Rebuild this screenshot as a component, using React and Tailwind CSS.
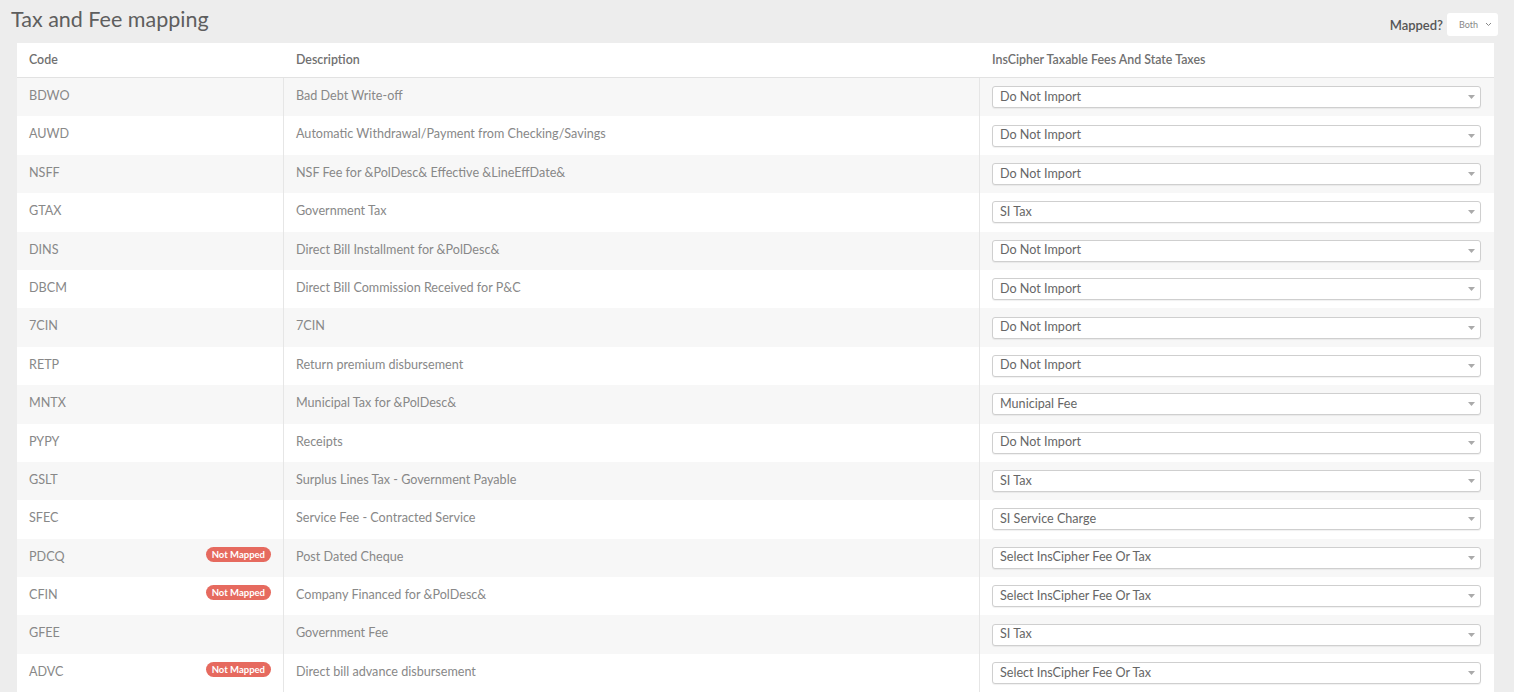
import React from "react";

const rows = [
  { code: "BDWO", desc: "Bad Debt Write-off", value: "Do Not Import" },
  { code: "AUWD", desc: "Automatic Withdrawal/Payment from Checking/Savings", value: "Do Not Import" },
  { code: "NSFF", desc: "NSF Fee for &PolDesc& Effective &LineEffDate&", value: "Do Not Import" },
  { code: "GTAX", desc: "Government Tax", value: "SI Tax" },
  { code: "DINS", desc: "Direct Bill Installment for &PolDesc&", value: "Do Not Import" },
  { code: "DBCM", desc: "Direct Bill Commission Received for P&C", value: "Do Not Import" },
  { code: "7CIN", desc: "7CIN", value: "Do Not Import" },
  { code: "RETP", desc: "Return premium disbursement", value: "Do Not Import" },
  { code: "MNTX", desc: "Municipal Tax for &PolDesc&", value: "Municipal Fee" },
  { code: "PYPY", desc: "Receipts", value: "Do Not Import" },
  { code: "GSLT", desc: "Surplus Lines Tax - Government Payable", value: "SI Tax" },
  { code: "SFEC", desc: "Service Fee - Contracted Service", value: "SI Service Charge" },
  { code: "PDCQ", desc: "Post Dated Cheque", value: "Select InsCipher Fee Or Tax", notMapped: true },
  { code: "CFIN", desc: "Company Financed for &PolDesc&", value: "Select InsCipher Fee Or Tax", notMapped: true },
  { code: "GFEE", desc: "Government Fee", value: "SI Tax" },
  { code: "ADVC", desc: "Direct bill advance disbursement", value: "Select InsCipher Fee Or Tax", notMapped: true },
];

// Little grey triangle on the right of every select
const Caret = () => (
  <svg width="7" height="4" viewBox="0 0 7 4" className="shrink-0">
    <path d="M0 0h7L3.5 4z" fill="#aaa" />
  </svg>
);

export default function App() {
  return (
    <div
      className="w-[1514px] h-[692px] overflow-hidden bg-[#ededed] text-[#888]"
      style={{ fontFamily: "Lato, 'Open Sans', sans-serif" }}
    >
      {/* Titre + filtre */}
      <div className="flex items-center justify-between h-[43px] pl-[11px] pr-[16px]">
        <h1 className="text-[21.5px] text-[#5e5e5e] leading-none -mt-[4px]">Tax and Fee mapping</h1>
        <div className="flex items-center gap-[4px] mt-[6px]">
          <span className="text-[13px] text-[#555] font-semibold mt-[2px]">Mapped?</span>
          <div className="flex items-center justify-between w-[51px] h-[23px] bg-white rounded-[3px] pl-[12px] pr-[6px]">
            <span className="text-[9px] text-[#888]">Both</span>
            <svg width="7" height="5" viewBox="0 0 7 5">
              <path d="M1 1l2.5 2.5L6 1" stroke="#888" strokeWidth="1" fill="none" />
            </svg>
          </div>
        </div>
      </div>

      {/* Tableau */}
      <div className="ml-[17px] w-[1477px] bg-white">
        <div className="flex h-[35px] items-center border-b border-[#e2e2e2] text-[12.4px] font-semibold text-[#707070]">
          <div className="w-[267px] pl-[12px]">Code</div>
          <div className="w-[696px] pl-[12px]">Description</div>
          <div className="flex-1 pl-[12px]">InsCipher Taxable Fees And State Taxes</div>
        </div>
        {rows.map((r, i) => (
          <div
            key={r.code}
            className={`flex h-[38.4px] text-[12.6px] ${i % 2 === 0 ? "bg-[#f7f7f7]" : "bg-white"}`}
          >
            <div className="w-[267px] flex items-start justify-between pl-[12px] pr-[12px] pt-[9px] border-r border-[#e6e6e6]">
              <span>{r.code}</span>
              {r.notMapped && (
                <span className="mt-[-1px] h-[15px] px-[6px] rounded-full bg-[#e66a5f] text-white text-[9.5px] font-bold leading-[15px]">
                  Not Mapped
                </span>
              )}
            </div>
            <div className="w-[696px] pl-[12px] pt-[9px] border-r border-[#e6e6e6]">{r.desc}</div>
            <div className="flex-1 flex items-center pl-[12px] pr-[13px]">
              <div className="flex w-full h-[22px] items-center justify-between bg-white border border-[#cfcfcf] rounded-[3px] pl-[7px] pr-[5px] shadow-[0_1px_1px_rgba(0,0,0,0.06)]">
                <span className="text-[#666] text-[12.6px]">{r.value}</span>
                <Caret />
              </div>
            </div>
          </div>
        ))}
      </div>
    </div>
  );
}
